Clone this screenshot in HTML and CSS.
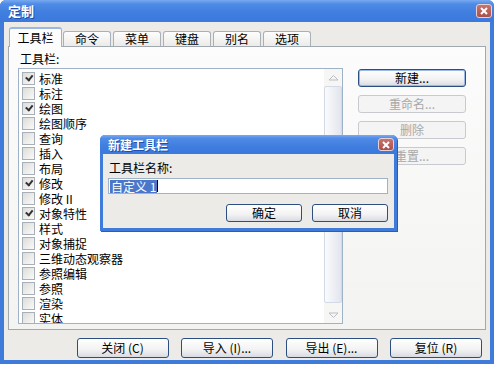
FILE: index.html
```html
<!DOCTYPE html>
<html lang="zh-CN">
<head>
<meta charset="UTF-8">
<title>定制</title>
<link rel="stylesheet" href="styles.css">
</head>
<body>
    <div class="window">
        <div class="titlebar">
            <span class="title">定制</span>
            <span class="close">
                <svg width="8" height="8" viewBox="0 0 8 8"><path d="M1 1L7 7M7 1L1 7" stroke="#fff" stroke-width="2"/></svg>
            </span>
        </div>
        <div class="body">
            <div class="tabs">
                <div class="tab active">工具栏</div>
                <div class="tab">命令</div>
                <div class="tab">菜单</div>
                <div class="tab">键盘</div>
                <div class="tab">别名</div>
                <div class="tab">选项</div>
            </div>
            <div class="panel">
                <div class="left">
                    <div class="label">工具栏:</div>
                    <div class="listbox">
                        <ul class="items">
                            <li><span class="check on"></span>标准</li>
                            <li><span class="check"></span>标注</li>
                            <li><span class="check on"></span>绘图</li>
                            <li><span class="check"></span>绘图顺序</li>
                            <li><span class="check"></span>查询</li>
                            <li><span class="check"></span>插入</li>
                            <li><span class="check"></span>布局</li>
                            <li><span class="check on"></span>修改</li>
                            <li><span class="check"></span>修改 II</li>
                            <li><span class="check on"></span>对象特性</li>
                            <li><span class="check"></span>样式</li>
                            <li><span class="check"></span>对象捕捉</li>
                            <li><span class="check"></span>三维动态观察器</li>
                            <li><span class="check"></span>参照编辑</li>
                            <li><span class="check"></span>参照</li>
                            <li><span class="check"></span>渲染</li>
                            <li><span class="check"></span>实体</li>
                        </ul>
                        <div class="scrollbar">
                            <div class="arrow">
                                <svg width="11" height="7" viewBox="0 0 11 7"><path d="M1 6L5.5 1.5L10 6Z" fill="none" stroke="#b9bdc6"/></svg>
                            </div>
                            <div class="thumb"></div>
                            <div class="arrow">
                                <svg width="11" height="7" viewBox="0 0 11 7"><path d="M1 1L5.5 5.5L10 1Z" fill="none" stroke="#b9bdc6"/></svg>
                            </div>
                        </div>
                    </div>
                </div>
                <div class="side">
                    <button class="btn default">新建...</button>
                    <button class="btn" disabled>重命名...</button>
                    <button class="btn" disabled>删除</button>
                    <button class="btn" disabled>重置...</button>
                </div>
            </div>
            <div class="footer">
                <button class="btn big">关闭 (C)</button>
                <button class="btn big">导入 (I)...</button>
                <button class="btn big">导出 (E)...</button>
                <button class="btn big">复位 (R)</button>
            </div>
        </div>
    </div>

    <div class="modal">
        <div class="titlebar small">
            <span class="title">新建工具栏</span>
            <span class="close">
                <svg width="8" height="8" viewBox="0 0 8 8"><path d="M1 1L7 7M7 1L1 7" stroke="#fff" stroke-width="2"/></svg>
            </span>
        </div>
        <div class="modal-body">
            <div class="label">工具栏名称:</div>
            <div class="input"><span class="sel">自定义 1</span><span class="caret"></span></div>
            <div class="modal-buttons">
                <button class="btn dlg">确定</button>
                <button class="btn dlg">取消</button>
            </div>
        </div>
    </div>
</body>
</html>
```

FILE: styles.css
```css
body {
    margin: 0;
    background: #fff;
    font-family: "Noto Sans CJK SC", "DejaVu Sans", sans-serif;
    font-size: 12px;
    line-height: 14px;
    color: #000;
}
ul {
    margin: 0;
    padding: 0;
    list-style: none;
}
.window {
    width: 494px;
    height: 364px;
    box-sizing: border-box;
    padding: 0 4px 4px;
    background: #3f7bdb;
    border-radius: 6px 6px 0 0;
    display: flex;
    flex-direction: column;
}
.titlebar {
    height: 22px;
    margin: 0 -4px;
    padding: 0 2px 0 8px;
    display: flex;
    align-items: center;
    justify-content: space-between;
    border-radius: 6px 6px 0 0;
    background: linear-gradient(#78aaf0 0%, #4f8be6 18%, #3f7ddf 60%, #3c79dc 100%);
}
.title {
    color: #fff;
    font-weight: bold;
    font-size: 13px;
    text-shadow: 1px 1px 0 #1f4ea8;
}
.close {
    width: 14px;
    height: 12px;
    border: 1px solid #e8d0d0;
    border-radius: 3px;
    background: linear-gradient(#c8736e, #a9504d);
    display: flex;
    align-items: center;
    justify-content: center;
}
.body {
    flex: 1;
    background: #ecebe7;
    padding: 5px 4px 0;
    display: flex;
    flex-direction: column;
}
.tabs {
    height: 19px;
    padding-left: 1px;
    display: flex;
    align-items: flex-end;
    gap: 2px;
}
.tab {
    width: 48px;
    height: 15px;
    box-sizing: border-box;
    border: 1px solid #a8b0b8;
    border-bottom: none;
    border-radius: 3px 3px 0 0;
    background: linear-gradient(#fdfdfd, #ecebe8);
    text-align: center;
    line-height: 14px;
}
.tab.active {
    width: 53px;
    height: 20px;
    margin-right: -1px;
    margin-bottom: -1px;
    line-height: 18px;
    background: #fcfcfc;
    border-top: 2px solid #9bb8e0;
    position: relative;
    z-index: 1;
}
.panel {
    height: 284px;
    box-sizing: border-box;
    border: 1px solid #a0a8b0;
    background: linear-gradient(#fcfcfc, #f3f3f1);
    padding: 5px 0 0 10px;
    display: flex;
    align-items: flex-start;
}
.label {
    line-height: 14px;
    padding-left: 1px;
}
.listbox {
    margin: 2px 0 0 -1px;
    width: 325px;
    height: 256px;
    box-sizing: border-box;
    border: 1px solid #9fb3c8;
    background: #fff;
    display: flex;
    overflow: hidden;
}
.items {
    flex: 1;
    padding-top: 2px;
    overflow: hidden;
}
.items li {
    height: 15px;
    line-height: 15px;
    display: flex;
    align-items: center;
    padding-left: 3px;
    white-space: nowrap;
}
.check {
    width: 11px;
    height: 11px;
    margin-right: 4px;
    border: 1px solid #a9afb8;
    background: linear-gradient(135deg, #dcdcd8, #fafafa);
    position: relative;
}
.check.on::after {
    content: "";
    position: absolute;
    left: 2px;
    top: 1px;
    width: 5px;
    height: 3px;
    border-left: 2px solid #333;
    border-bottom: 2px solid #333;
    transform: rotate(-50deg) translate(0, 1px);
}
.scrollbar {
    width: 18px;
    background: #f6f6f4;
    display: flex;
    flex-direction: column;
}
.arrow {
    height: 16px;
    display: flex;
    align-items: center;
    justify-content: center;
}
.thumb {
    flex: 1;
    margin: 1px 0 4px;
    border: 1px solid #d4d9e6;
    border-radius: 2px;
    background: linear-gradient(to right, #fbfbfd, #e2e5ee);
}
.side {
    padding: 17px 0 0 15px;
    display: flex;
    flex-direction: column;
    gap: 8px;
}
.btn {
    font-family: inherit;
    font-size: 12px;
    color: #000;
    padding: 0;
    box-sizing: border-box;
    border: 1px solid #2d4f80;
    border-radius: 3px;
    background: linear-gradient(#ffffff, #f2f2f2 60%, #d8dbe4);
    line-height: 14px;
}
.side .btn {
    width: 108px;
    height: 18px;
}
.btn.default {
    box-shadow: inset 0 0 0 1px #9ab8e8;
}
.btn:disabled {
    color: #a8a8a8;
    border-color: #c8cad0;
    background: #f4f4f4;
}
.footer {
    padding: 8px 4px 0 0;
    display: flex;
    justify-content: flex-end;
    gap: 12.5px;
}
.btn.big {
    width: 92px;
    height: 20px;
}
.modal {
    position: absolute;
    left: 100px;
    top: 135px;
    width: 297px;
    height: 96px;
    box-sizing: border-box;
    padding: 0 3px 3px;
    background: #3f7bdb;
    border-radius: 5px 5px 0 0;
    display: flex;
    flex-direction: column;
    box-shadow: 1px 1px 0 #2d5cb0;
}
.titlebar.small {
    height: 19px;
    margin: 0 -3px;
    padding: 0 3px 0 8px;
    border-radius: 5px 5px 0 0;
}
.titlebar.small .title {
    font-size: 12px;
}
.titlebar.small .close {
    width: 14px;
    height: 11px;
}
.modal-body {
    flex: 1;
    background: #ecebe7;
    padding: 7px 6px 0 5px;
}
.input {
    margin-top: 3px;
    height: 16px;
    box-sizing: border-box;
    border: 1px solid #9fb3c8;
    background: #fff;
    padding-left: 1px;
    display: flex;
    align-items: center;
    line-height: 13px;
}
.sel {
    background: #4b76c9;
    color: #fff;
    padding: 0 1px;
}
.caret {
    width: 1px;
    height: 12px;
    background: #000;
}
.modal-buttons {
    margin-top: 10px;
    display: flex;
    justify-content: flex-end;
    gap: 10px;
}
.btn.dlg {
    width: 76px;
    height: 18px;
}
```
